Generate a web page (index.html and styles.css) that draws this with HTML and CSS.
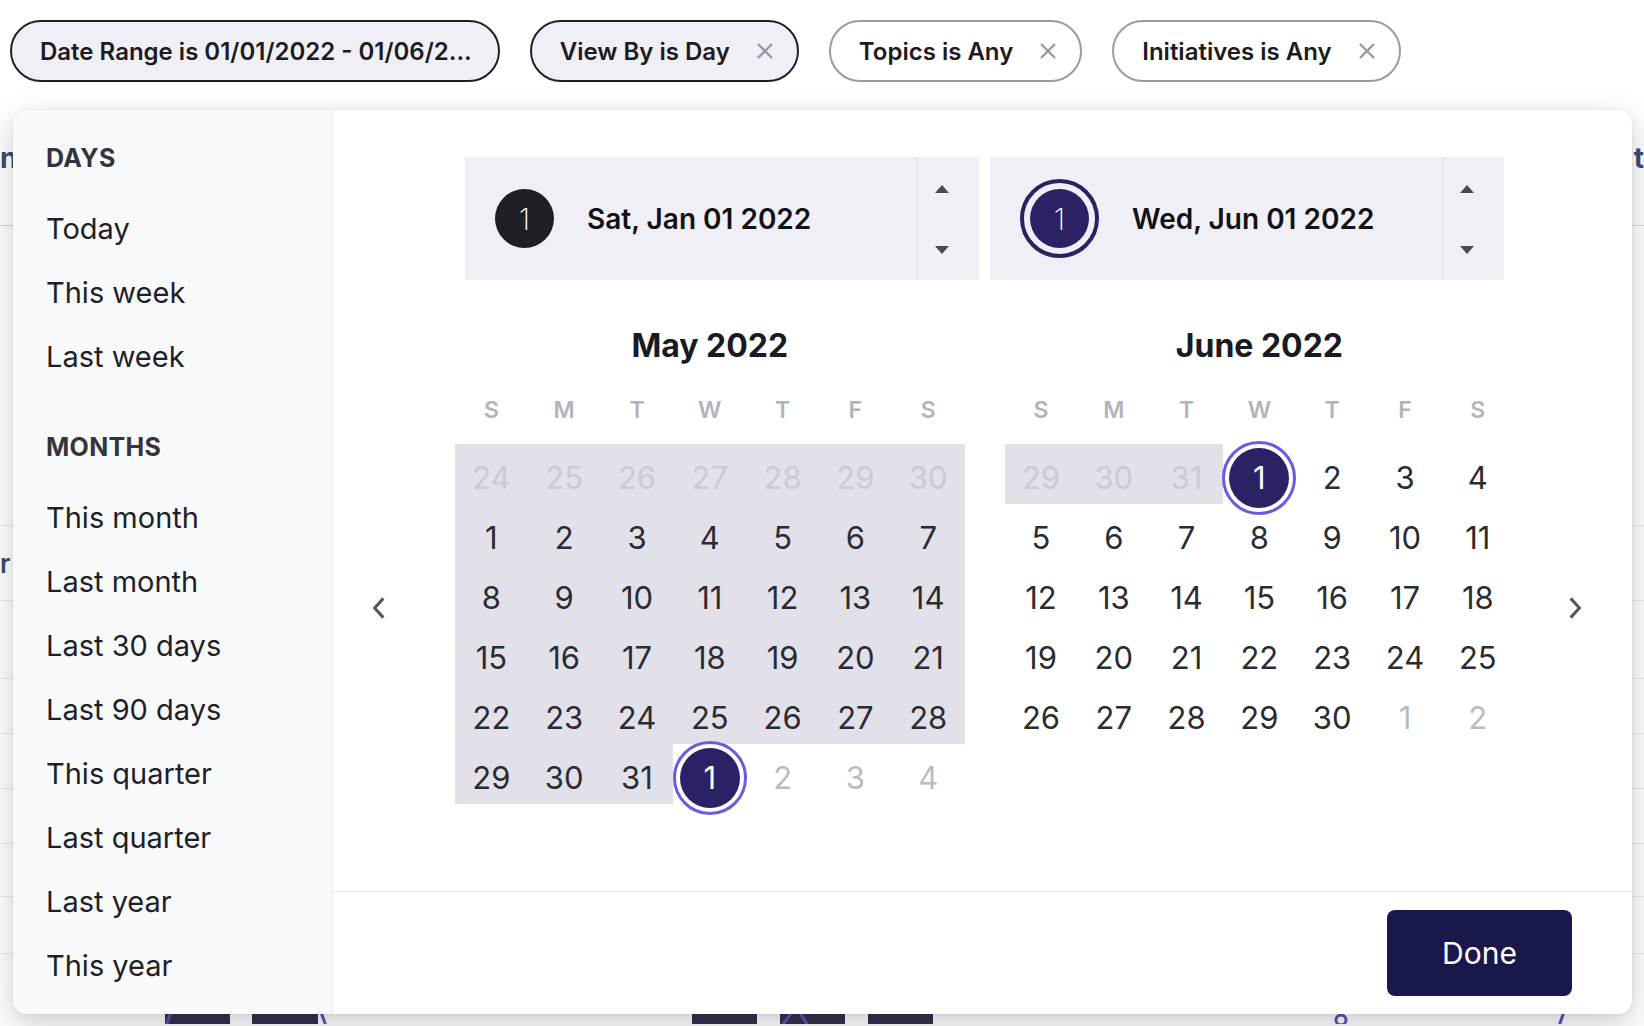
FILE: index.html
```html
<!DOCTYPE html>
<html>
<head>
<meta charset="utf-8">
<link rel="stylesheet" href="styles.css">
</head>
<body>
<div class="page">
  <div class="filters">
    <div class="chip chip-active chip-noclose"><span>Date Range is 01/01/2022 - 01/06/2...</span></div>
    <div class="chip chip-active"><span>View By is Day</span><svg class="x" viewBox="0 0 18 18"><path d="M2 2L16 16M16 2L2 16"/></svg></div>
    <div class="chip"><span>Topics is Any</span><svg class="x" viewBox="0 0 18 18"><path d="M2 2L16 16M16 2L2 16"/></svg></div>
    <div class="chip"><span>Initiatives is Any</span><svg class="x" viewBox="0 0 18 18"><path d="M2 2L16 16M16 2L2 16"/></svg></div>
  </div>
  <div class="bg">
    <div class="bg-head"><span class="bg-l">n</span><span class="bg-r">t</span></div>
    <div class="bg-block"></div>
    <div class="bg-row bg-row-text"><span class="bg-l2">r S</span></div>
    <div class="bg-row r78"></div>
    <div class="bg-row"></div>
    <div class="bg-row"></div>
    <div class="bg-row"></div>
    <div class="bg-row r53"></div>
    <div class="bg-row r57"></div>
    <svg class="chart" viewBox="0 0 1644 70" width="1644" height="70">
      <rect x="165" y="40" width="65" height="40" fill="#332f48"/>
      <rect x="252" y="40" width="66" height="40" fill="#332f48"/>
      <rect x="692" y="40" width="65" height="40" fill="#332f48"/>
      <rect x="780" y="40" width="65" height="40" fill="#332f48"/>
      <rect x="868" y="40" width="65" height="40" fill="#332f48"/>
      <path d="M166 72L174 50M318 50L326 72M782 72L796 52L808 72M1559 72L1566 52" stroke="#5d50b3" stroke-width="3" fill="none"/>
      <circle cx="1341" cy="66" r="5" stroke="#5d50b3" stroke-width="3" fill="none"/>
    </svg>
  </div>
</div>

<div class="popover">
  <aside class="sidebar">
    <div class="side-group">
      <div class="side-h">DAYS</div>
      <div class="side-item">Today</div>
      <div class="side-item">This week</div>
      <div class="side-item">Last week</div>
    </div>
    <div class="side-group">
      <div class="side-h">MONTHS</div>
      <div class="side-item">This month</div>
      <div class="side-item">Last month</div>
      <div class="side-item">Last 30 days</div>
      <div class="side-item">Last 90 days</div>
      <div class="side-item">This quarter</div>
      <div class="side-item">Last quarter</div>
      <div class="side-item">Last year</div>
      <div class="side-item">This year</div>
    </div>
  </aside>
  <section class="panel">
    <div class="main">
      <div class="inputs">
        <div class="dbox">
          <div class="dbox-main">
            <div class="dot dot-dark">1</div>
            <div class="dtext">Sat, Jan 01 2022</div>
          </div>
          <div class="dbox-step">
            <svg class="tri" viewBox="0 0 16 10"><path d="M8 1L15 9H1Z"/></svg>
            <svg class="tri" viewBox="0 0 16 10"><path d="M1 1H15L8 9Z"/></svg>
          </div>
        </div>
        <div class="dbox">
          <div class="dbox-main">
            <div class="ring"><div class="dot dot-navy">1</div></div>
            <div class="dtext">Wed, Jun 01 2022</div>
          </div>
          <div class="dbox-step">
            <svg class="tri" viewBox="0 0 16 10"><path d="M8 1L15 9H1Z"/></svg>
            <svg class="tri" viewBox="0 0 16 10"><path d="M1 1H15L8 9Z"/></svg>
          </div>
        </div>
      </div>

      <div class="cal-row">
        <div class="nav"><svg viewBox="0 0 16 26" class="chev"><path d="M13 2L3 13L13 24"/></svg></div>
        <div class="months">
          <div class="month">
            <div class="month-title">May 2022</div>
            <div class="wds"><span>S</span><span>M</span><span>T</span><span>W</span><span>T</span><span>F</span><span>S</span></div>
            <div class="grid">
              <div class="day in out">24</div><div class="day in out">25</div><div class="day in out">26</div><div class="day in out">27</div><div class="day in out">28</div><div class="day in out">29</div><div class="day in out">30</div>
              <div class="day in">1</div><div class="day in">2</div><div class="day in">3</div><div class="day in">4</div><div class="day in">5</div><div class="day in">6</div><div class="day in">7</div>
              <div class="day in">8</div><div class="day in">9</div><div class="day in">10</div><div class="day in">11</div><div class="day in">12</div><div class="day in">13</div><div class="day in">14</div>
              <div class="day in">15</div><div class="day in">16</div><div class="day in">17</div><div class="day in">18</div><div class="day in">19</div><div class="day in">20</div><div class="day in">21</div>
              <div class="day in">22</div><div class="day in">23</div><div class="day in">24</div><div class="day in">25</div><div class="day in">26</div><div class="day in">27</div><div class="day in">28</div>
              <div class="day in">29</div><div class="day in">30</div><div class="day in">31</div><div class="day"><span class="sel"><span>1</span></span></div><div class="day out">2</div><div class="day out">3</div><div class="day out">4</div>
            </div>
          </div>
          <div class="month">
            <div class="month-title">June 2022</div>
            <div class="wds"><span>S</span><span>M</span><span>T</span><span>W</span><span>T</span><span>F</span><span>S</span></div>
            <div class="grid">
              <div class="day in out">29</div><div class="day in out">30</div><div class="day in out">31</div><div class="day"><span class="sel"><span>1</span></span></div><div class="day">2</div><div class="day">3</div><div class="day">4</div>
              <div class="day">5</div><div class="day">6</div><div class="day">7</div><div class="day">8</div><div class="day">9</div><div class="day">10</div><div class="day">11</div>
              <div class="day">12</div><div class="day">13</div><div class="day">14</div><div class="day">15</div><div class="day">16</div><div class="day">17</div><div class="day">18</div>
              <div class="day">19</div><div class="day">20</div><div class="day">21</div><div class="day">22</div><div class="day">23</div><div class="day">24</div><div class="day">25</div>
              <div class="day">26</div><div class="day">27</div><div class="day">28</div><div class="day">29</div><div class="day">30</div><div class="day out">1</div><div class="day out">2</div>
            </div>
          </div>
        </div>
        <div class="nav"><svg viewBox="0 0 16 26" class="chev"><path d="M3 2L13 13L3 24"/></svg></div>
      </div>
    </div>
    <div class="footer">
      <div class="done">Done</div>
    </div>
  </section>
</div>
</body>
</html>
```

FILE: styles.css
```css
html, body {
  margin: 0;
  padding: 0;
}
body {
  width: 1644px;
  height: 1026px;
  overflow: hidden;
  background: #ffffff;
  font-family: Inter, "Noto Sans", "Liberation Sans", sans-serif;
  color: #1f1f27;
  position: relative;
}

/* ---------- filter chips ---------- */
.filters {
  display: flex;
  gap: 30px;
  padding: 20px 0 0 10px;
  height: 62px;
}
.chip {
  box-sizing: border-box;
  height: 62px;
  border: 2px solid #9b99a6;
  border-radius: 31px;
  background: #ffffff;
  display: flex;
  align-items: center;
  gap: 26px;
  padding: 0 23px 0 28px;
  font-size: 24px;
  font-weight: 600;
  color: #1c1b22;
  white-space: nowrap;
}
.chip-active {
  background: #f0eff6;
  border-color: #1f1f29;
}
.chip-noclose {
  padding-right: 26px;
}
.x {
  width: 18px;
  height: 18px;
  stroke: #9a98a5;
  stroke-width: 2.4;
  fill: none;
}

/* ---------- background page ---------- */
.bg {
  display: flex;
  flex-direction: column;
}
.bg-head {
  height: 144px;
  border-bottom: 1px solid #d6d7de;
  display: flex;
  justify-content: space-between;
  align-items: flex-start;
  padding-top: 58px;
  box-sizing: border-box;
  font-size: 28px;
  font-weight: 700;
  color: #3c4a6b;
  line-height: 36px;
}
.bg-l {
  margin-left: 0;
}
.bg-block {
  height: 299px;
  border-bottom: 1px solid #e6e6eb;
}
.bg-row {
  height: 54px;
  border-bottom: 1px solid #e9e9ee;
}
.bg-row-text {
  height: 74px;
  display: flex;
  align-items: center;
  font-size: 26px;
  font-weight: 600;
  color: #3c4a6b;
}
.bg-l2 {
  margin-left: 0;
}
.r78 { height: 77px; }
.r53 { height: 52px; }
.r57 { height: 56px; }
.chart {
  display: block;
  margin-top: 0;
}

/* ---------- popover ---------- */
.popover {
  position: absolute;
  top: 110px;
  left: 13px;
  width: 1619px;
  height: 904px;
  background: #ffffff;
  border-radius: 14px;
  box-shadow: 0 10px 30px rgba(20, 20, 40, 0.22), 0 0 3px rgba(0, 0, 0, 0.08);
  display: flex;
  overflow: hidden;
}
.sidebar {
  width: 320px;
  flex: none;
  box-sizing: border-box;
  background: #f8f9fb;
  border-right: 1px solid #e8e8ed;
  padding: 33px 0 0 33px;
}
.side-group + .side-group {
  margin-top: 43px;
}
.side-h {
  font-size: 25px;
  font-weight: 700;
  line-height: 30px;
  color: #34343e;
  letter-spacing: 0.3px;
  margin-bottom: 24px;
}
.side-item {
  font-size: 29px;
  line-height: 64px;
  color: #1f1f27;
}

.panel {
  flex: 1;
  display: flex;
  flex-direction: column;
}
.main {
  flex: 1;
  padding-top: 47px;
}
.inputs {
  display: flex;
  justify-content: center;
  gap: 11px;
  padding-left: 4px;
}
.dbox {
  width: 514px;
  height: 123px;
  background: #f0eff5;
  display: flex;
}
.dbox-main {
  flex: 1;
  display: flex;
  align-items: center;
  gap: 33px;
  padding-left: 30px;
}
.dbox-step {
  width: 62px;
  box-sizing: border-box;
  border-left: 1px solid #dcdbe3;
  display: flex;
  flex-direction: column;
  justify-content: space-between;
  align-items: center;
  padding: 27px 14px 25px 0;
}
.tri {
  width: 16px;
  height: 10px;
  fill: #4b4a52;
}
.dot {
  width: 59px;
  height: 59px;
  border-radius: 50%;
  color: #ffffff;
  font-size: 30px;
  font-weight: 200;
  display: flex;
  align-items: center;
  justify-content: center;
  flex: none;
}
.dot-dark {
  background: #1f1e24;
}
.dot-navy {
  background: #2b2163;
}
.ring {
  width: 79px;
  height: 79px;
  box-sizing: border-box;
  border: 4px solid #2b2163;
  border-radius: 50%;
  display: flex;
  align-items: center;
  justify-content: center;
  flex: none;
}
.dtext {
  font-size: 28px;
  font-weight: 600;
  color: #111116;
  white-space: nowrap;
}

/* ---------- calendars ---------- */
.cal-row {
  display: flex;
  align-items: flex-start;
  margin-top: 46px;
  padding-left: 18px;
}
.nav {
  width: 56px;
  height: 56px;
  margin-top: 254px;
  display: flex;
  align-items: center;
  justify-content: center;
  flex: none;
}
.chev {
  width: 14px;
  height: 24px;
  stroke: #56555c;
  stroke-width: 3.4;
  fill: none;
}
.months {
  display: flex;
  gap: 40px;
  margin-left: 48px;
  margin-right: 33px;
}
.month {
  width: 509.6px;
}
.month-title {
  text-align: center;
  font-size: 32px;
  font-weight: 700;
  line-height: 40px;
  color: #1a1a22;
  margin-bottom: 24px;
}
.wds {
  display: grid;
  grid-template-columns: repeat(7, 72.8px);
  margin-bottom: 13.5px;
}
.wds span {
  text-align: center;
  height: 40px;
  line-height: 40px;
  font-size: 23px;
  font-weight: 600;
  color: #b3b2bd;
}
.grid {
  display: grid;
  grid-template-columns: repeat(7, 72.8px);
}
.day {
  height: 60px;
  box-sizing: border-box;
  padding-top: 8px;
  display: flex;
  align-items: center;
  justify-content: center;
  font-size: 31px;
  line-height: 1;
  color: #2b2b33;
}
.day.in {
  background: #e2e1ea;
}
.day.out {
  color: #bbbac5;
}
.day.in.out {
  color: #cbcad5;
}
.sel {
  width: 74px;
  height: 74px;
  flex: none;
  box-sizing: border-box;
  border: 3px solid #6a5be6;
  border-radius: 50%;
  display: flex;
  align-items: center;
  justify-content: center;
}
.sel span {
  width: 60px;
  height: 60px;
  border-radius: 50%;
  background: #2b2165;
  color: #ffffff;
  display: flex;
  align-items: center;
  justify-content: center;
}

/* ---------- footer ---------- */
.footer {
  flex: none;
  height: 123px;
  box-sizing: border-box;
  border-top: 1px solid #ebebef;
  display: flex;
  justify-content: flex-end;
  align-items: center;
  padding-right: 60px;
}
.done {
  width: 185px;
  height: 86px;
  border-radius: 8px;
  background: #19184a;
  color: #ffffff;
  font-size: 30px;
  display: flex;
  align-items: center;
  justify-content: center;
}
```
